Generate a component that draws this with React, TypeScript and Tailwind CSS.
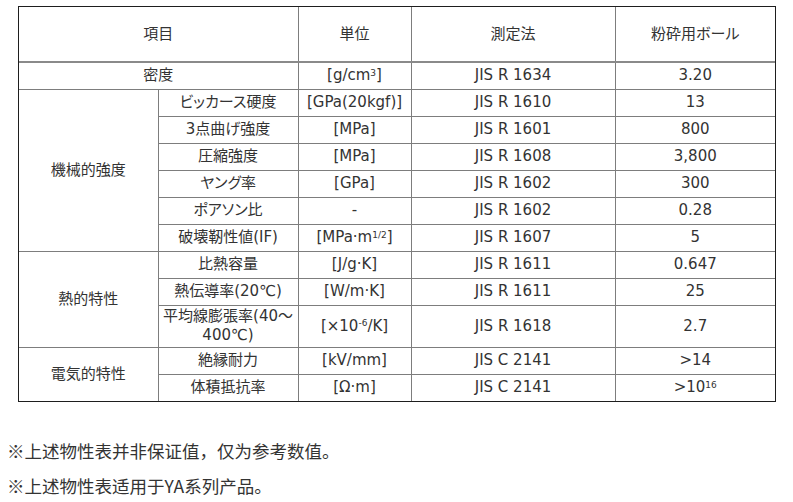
import React from "react";

type Row = {
  group?: { label: string; span: number };
  item: React.ReactNode;
  unit: React.ReactNode;
  method: string;
  value: React.ReactNode;
  tall?: boolean;
};

const rows: Row[] = [
  { group: { label: "機械的強度", span: 6 }, item: "ビッカース硬度", unit: "[GPa(20kgf)]", method: "JIS R 1610", value: "13" },
  { item: "3点曲げ強度", unit: "[MPa]", method: "JIS R 1601", value: "800" },
  { item: "圧縮強度", unit: "[MPa]", method: "JIS R 1608", value: "3,800" },
  { item: "ヤング率", unit: "[GPa]", method: "JIS R 1602", value: "300" },
  { item: "ポアソン比", unit: "-", method: "JIS R 1602", value: "0.28" },
  {
    item: "破壊靭性値(IF)",
    unit: (
      <>
        [MPa·m<sup className="text-[9px]">1/2</sup>]
      </>
    ),
    method: "JIS R 1607",
    value: "5",
  },
  { group: { label: "熱的特性", span: 3 }, item: "比熱容量", unit: "[J/g·K]", method: "JIS R 1611", value: "0.647" },
  { item: "熱伝導率(20℃)", unit: "[W/m·K]", method: "JIS R 1611", value: "25" },
  {
    item: (
      <>
        平均線膨張率(40～
        <br />
        400℃)
      </>
    ),
    unit: (
      <>
        [×10<sup className="text-[9px]">-6</sup>/K]
      </>
    ),
    method: "JIS R 1618",
    value: "2.7",
    tall: true,
  },
  { group: { label: "電気的特性", span: 2 }, item: "絶縁耐力", unit: "[kV/mm]", method: "JIS C 2141", value: ">14" },
  {
    item: "体積抵抗率",
    unit: "[Ω·m]",
    method: "JIS C 2141",
    value: (
      <>
        &gt;10<sup className="text-[9px]">16</sup>
      </>
    ),
  },
];

const cell = "border border-[#7d7d7d] p-0 text-center align-middle";

export default function App() {
  return (
    <div className="w-[793px] h-[502px] bg-white text-[#333]">
      <div className="pl-[18px] pt-[6px]">
        <div className="w-[758px] border border-[#1e1e1e]">
          <table className="w-full table-fixed border-collapse border-hidden font-['DejaVu_Sans','Noto_Sans_CJK_JP',sans-serif] text-[15px] leading-[19px] [font-feature-settings:'palt']">
            <colgroup>
              <col className="w-[139px]" />
              <col className="w-[140px]" />
              <col className="w-[113px]" />
              <col className="w-[204px]" />
              <col />
            </colgroup>
            <tbody>
              <tr className="h-[55px]">
                <td colSpan={2} className={`${cell} border-b-2 border-b-[#8a8a8a]`}>項目</td>
                <td className={`${cell} border-b-2 border-b-[#8a8a8a]`}>単位</td>
                <td className={`${cell} border-b-2 border-b-[#8a8a8a]`}>測定法</td>
                <td className={`${cell} border-b-2 border-b-[#8a8a8a]`}>粉砕用ボール</td>
              </tr>
              <tr className="h-[27px]">
                <td colSpan={2} className={cell}>密度</td>
                <td className={cell}>
                  [g/cm<sup className="text-[9px]">3</sup>]
                </td>
                <td className={cell}>JIS R 1634</td>
                <td className={cell}>3.20</td>
              </tr>
              {rows.map((r, i) => (
                <tr key={i} className={r.tall ? "h-[42px]" : "h-[27px]"}>
                  {r.group && (
                    <td rowSpan={r.group.span} className={cell}>
                      {r.group.label}
                    </td>
                  )}
                  <td className={cell}>{r.item}</td>
                  <td className={cell}>{r.unit}</td>
                  <td className={cell}>{r.method}</td>
                  <td className={cell}>{r.value}</td>
                </tr>
              ))}
            </tbody>
          </table>
        </div>
      </div>
      <div className="pl-[7px] pt-[31px] font-['Noto_Sans_CJK_SC',sans-serif] text-[17.5px] leading-[35px] text-[#333]">
        <p>※上述物性表并非保证值，仅为参考数值。</p>
        <p>※上述物性表适用于YA系列产品。</p>
      </div>
    </div>
  );
}
